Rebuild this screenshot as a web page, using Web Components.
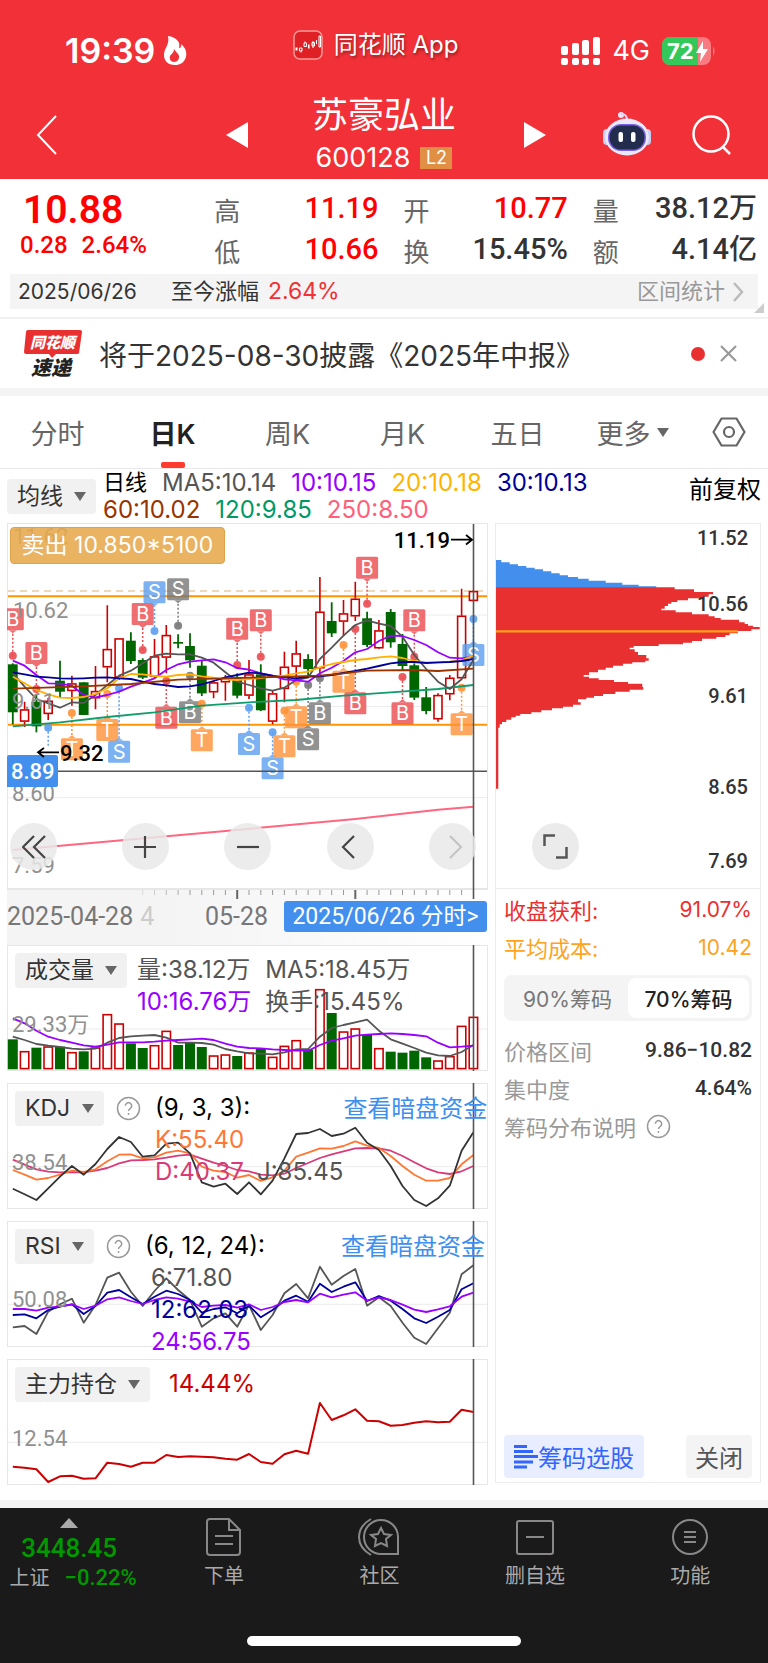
<!DOCTYPE html>
<html lang="zh-CN">
<head>
<meta charset="utf-8">
<meta name="viewport" content="width=device-width, initial-scale=1">
<title>苏豪弘业 600128</title>
<style>
html{--ui:"Inter","Noto Sans CJK SC",sans-serif;--din:"Roboto","Noto Sans CJK SC",sans-serif;--line:#ececec;--fill:#f4f4f4}
body{margin:0;background:#fff;color:#333;font-family:var(--ui)}
</style>
</head>
<body>
<stock-page>
  <app-header slot="header" name="苏豪弘业" code="600128"></app-header>
  <quote-board></quote-board>
  <news-bar>将于2025-08-30披露《2025年中报》</news-bar>
  <period-tabs></period-tabs>
  <ma-legend></ma-legend>
  <chart-area>
    <kline-chart slot="charts"></kline-chart>
    <time-ruler slot="charts"></time-ruler>
    <indicator-panel slot="charts" kind="vol"></indicator-panel>
    <indicator-panel slot="charts" kind="kdj"></indicator-panel>
    <indicator-panel slot="charts" kind="rsi"></indicator-panel>
    <indicator-panel slot="charts" kind="hold"></indicator-panel>
    <chip-panel slot="side"></chip-panel>
  </chart-area>
  <bottom-nav slot="footer"></bottom-nav>
</stock-page>
<script>
const BASE = `<style>
*{box-sizing:border-box}
:host{display:block;box-sizing:border-box}
button,select{font:inherit;color:inherit;border:0;background:none;padding:0;margin:0;appearance:none;white-space:nowrap}
a{color:inherit;text-decoration:none}
svg{display:block}
svg text{font-family:var(--din)}
</style>`;
function define(name, render) {
  customElements.define(name, class extends HTMLElement {
    connectedCallback() {
      if (this.shadowRoot) return;
      this.attachShadow({ mode: 'open' }).innerHTML = BASE + render(this);
    }
  });
}

/* Horizontal position of day i in every chart of the left column */
const X = i => Math.round((12.8 + 11.81 * i) * 10) / 10;
const line = (ys, base, color, w = 1.8) =>
  `<polyline fill="none" stroke="${color}" stroke-width="${w}" stroke-linejoin="round" points="${ys.map((y, i) => y == null ? '' : X(i) + ',' + (base + y / 3).toFixed(1)).join(' ')}"/>`;
const sparse = o => Array.from({ length: 40 }, (_, i) => o[i] ?? null);
const RED = '#cc0000', GREEN = '#006600';
const drop = (label, size = 23) => `<label class="drop"><select aria-label="${label}"><option>${label}</option></select><svg width="12" height="9" viewBox="0 0 12 9"><path d="M0 0H12L6 9Z" fill="#666"/></svg></label>`;
const DROP_CSS = `.drop{position:relative;display:inline-flex;height:35px;border-radius:4px;background:#f1f1f1;color:#333;font-size:23px;line-height:35px}
.drop select{padding:0 33px 0 10px;height:35px;line-height:35px}
.drop svg{position:absolute;right:10px;top:13px;pointer-events:none}`;
const HELP = `<svg width="25" height="25" viewBox="0 0 25 25" fill="none" stroke="#999" stroke-width="1.5"><circle cx="12.500" cy="12.500" r="11"/><path d="M9.300 9.800a3.200 3.200 0 1 1 4.800 2.800c-1.100.7-1.600 1.200-1.600 2.500"/><path d="M12.500 17v1.900"/></svg>`;

define('stock-page', () => `<style>
main{display:block}
.gap{height:8px;background:var(--fill);margin-top:15px}
</style><slot name="header"></slot><main><slot></slot></main><div class="gap"></div><slot name="footer"></slot>`);

define('app-header', el => `<style>
:host{background:#f23037;color:#fff}
.status{display:grid;grid-template-columns:1fr auto 1fr;height:90px;padding:11px 52px 0 65px;align-items:center}
.time,.sys{display:flex;align-items:center}
.time{font-size:34px;font-weight:600;gap:8px;line-height:40px}
.app{display:flex;align-items:center;gap:11px;font-size:24px;line-height:34px;margin:0 30px 11px 0;text-shadow:1px 2px 3px #0006}
.sys{justify-content:flex-end;gap:12px;font-size:27px}
.nav{display:grid;grid-template-columns:1fr 160px 1fr;gap:56px;padding:0 36px;height:89px;align-items:start}
.l,.r{display:flex;align-items:center;justify-content:space-between;height:89px}
.r{padding-left:4px}
.r .bot{margin:0 41px 2px auto}
h1{margin:0;font-size:36px;line-height:50px;font-weight:400;text-align:center;white-space:nowrap}
.code{display:flex;justify-content:center;align-items:center;gap:10px;font-size:27px;line-height:36px}
.code b{background:#e08f45;font-weight:400;font-size:18px;line-height:22px;width:32px;text-align:center}
</style>
<div class="status">
 <div class="time"><span>19:39</span><svg width="24" height="30" viewBox="0 0 24 30"><path d="M5 0C13 1 18 6 16 12C19 12 18 8 18 8C23 12 24 17 23 21C21 27 17 29 12 29C5 29 1 25 1 19C1 12 7 9 5 0Z" fill="#fff"/><path d="M11 13C13 17 17 18 16 22C15 25 13 26 11 26C8 26 6 23 7 20C8 18 11 17 11 13Z" fill="#f23037"/></svg></div>
 <div class="app"><svg width="30" height="30" viewBox="0 0 30 30"><rect x="1" y="1" width="28" height="28" rx="6" fill="#df2025" stroke="#ff9a98" stroke-width="1.500"/><path d="M2.500 17.500h2v3h-2zM15 14.500h1.600v4H15z" fill="#fff"/><path d="M6.500 18h2.500v3H6.500zM8 21v1.500M11 13h2.500v3.500H11zM12 11.500v1.500M19 12.500h2.500v3.500H19zM20 11v7M23.500 10v4M26 6h1.500v11H26z" fill="none" stroke="#fff"/></svg><span>同花顺 App</span></div>
 <div class="sys"><svg width="40" height="28" viewBox="0 0 40 28" fill="#fff"><rect x="1" y="9" width="7" height="9" rx="2"/><rect x="12" y="6" width="7" height="12" rx="2"/><rect x="22" y="3" width="7" height="15" rx="2"/><rect x="33" y="0" width="7" height="18" rx="2"/><rect x="1" y="21" width="7" height="7" rx="2"/><rect x="12" y="21" width="7" height="7" rx="2"/><rect x="22" y="21" width="7" height="7" rx="2"/><rect x="33" y="21" width="7" height="7" rx="2"/></svg><span>4G</span>
 <svg width="54" height="28" viewBox="0 0 54 28"><rect width="49" height="28" rx="8" fill="#f77b80"/><path d="M8 0H36V28H8A8 8 0 0 1 0 20V8A8 8 0 0 1 8 0Z" fill="#34c759"/><path d="M51 9Q54 14 51 19Z" fill="#f77b80"/><text x="5" y="22" font-size="22" font-weight="700" fill="#fff" style="font-family:Inter">72</text><path d="M41 4L34 16H39L38 25L46 12H41Z" fill="#fff"/></svg></div>
</div>
<div class="nav">
 <div class="l"><button aria-label="返回"><svg width="22" height="40" viewBox="0 0 22 40"><path d="M20 1L2 20L20 39" fill="none" stroke="#fff" stroke-width="2"/></svg></button><button aria-label="上一只"><svg width="22" height="26" viewBox="0 0 22 26"><path d="M22 0V26L0 13Z" fill="#fff"/></svg></button></div>
 <div><h1>${el.getAttribute('name')}</h1><div class="code"><span>${el.getAttribute('code')}</span><b>L2</b></div></div>
 <div class="r"><button aria-label="下一只"><svg width="22" height="26" viewBox="0 0 22 26"><path d="M0 0V26L22 13Z" fill="#fff"/></svg></button>
 <button class="bot" aria-label="智能助手"><svg width="48" height="45" viewBox="0 0 48 45"><circle cx="18" cy="4" r="3" fill="#e6e6fb"/><path d="M18 3Q24 3 24 9" fill="none" stroke="#d6d6f4" stroke-width="2"/><rect x="0" y="18" width="8" height="16" rx="4" fill="#c9cdf0"/><rect x="40" y="18" width="8" height="16" rx="4" fill="#c9cdf0"/><ellipse cx="24" cy="26" rx="22" ry="18.500" fill="#e9e9fa"/><rect x="5" y="13" width="38" height="27" rx="13" fill="#7a5fe0"/><rect x="6.500" y="14.500" width="35" height="24" rx="11.500" fill="#222c4c"/><rect x="15.500" y="21" width="4.500" height="10" rx="2" fill="#fff"/><rect x="28" y="21" width="4.500" height="10" rx="2" fill="#fff"/></svg></button>
 <button aria-label="搜索"><svg width="40" height="40" viewBox="0 0 40 40" fill="none" stroke="#fff" stroke-width="2.500"><circle cx="19" cy="19" r="17.500"/><path d="M31 32L38 39"/></svg></button></div>
</div>`);

define('quote-board', () => `<style>
:host{padding-top:10px;border-bottom:2px solid #f1f1f1;position:relative}
.q{display:grid;grid-template-columns:169fr 164fr 164fr 164fr;column-gap:25px;padding:0 11px 3px 20px}
.now{grid-row:span 2;color:#f00;font-family:var(--din);white-space:nowrap}
.now strong{display:block;font-size:39px;line-height:42px;padding-left:3px;font-weight:600}
.now span{font-size:24px;line-height:28px;font-weight:500;margin-right:14px}
.c{display:flex;justify-content:space-between;align-items:center;height:41px;font-size:26px;color:#666;white-space:nowrap}
.c b{font-family:var(--din);font-size:29px;font-weight:500;color:#333;margin-bottom:3px}
.c i{font:500 28px/30px "Noto Sans CJK SC"}
.c .up{color:#f00}
.strip{margin:0 10px 8px;height:35px;padding:0 14px 0 8px;background:var(--fill);display:flex;align-items:center;font-size:22px;line-height:35px}
.strip span{margin-left:34px;margin-right:9px}
.strip em{font-style:normal;color:#f23037;font-size:23px}
.strip time{font-size:21px}
.strip a{margin-left:auto;color:#999;display:flex;align-items:center;gap:8px}
.corner{position:absolute;right:4px;bottom:4px}
</style>
<div class="q">
<div class="now"><strong>10.88</strong><span>0.28</span><span>2.64%</span></div>
<div class="c">高<b class="up">11.19</b></div><div class="c">开<b class="up">10.77</b></div><div class="c">量<b>38.12<i>万</i></b></div>
<div class="c">低<b class="up">10.66</b></div><div class="c">换<b>15.45%</b></div><div class="c">额<b>4.14<i>亿</i></b></div>
</div>
<div class="strip"><time>2025/06/26</time><span>至今涨幅</span><em>2.64%</em><a href="#stat">区间统计<svg width="11" height="20" viewBox="0 0 11 20"><path d="M1 1L9 10L1 19" fill="none" stroke="#bbb" stroke-width="2.500"/></svg></a></div>
<svg class="corner" width="10" height="10" viewBox="0 0 10 10"><path d="M10 0V10H0Z" fill="#ccc"/></svg>`);

define('news-bar', () => `<style>
:host{display:flex;align-items:center;height:77px;border-bottom:8px solid var(--fill);padding:0 31px 0 24px;font-size:28px;white-space:nowrap}
.logo{margin-right:17px;overflow:visible}
.t{margin-right:auto}
.dot{width:14px;height:14px;border-radius:7px;background:#e93030;margin-right:15px}
svg text{font-family:"Noto Sans CJK SC";font-weight:900;font-style:italic}
</style>
<svg class="logo" width="58" height="48" viewBox="0 0 58 48"><path d="M4 0H56Q58 0 58 2L55 23Q55 24 53 24H32L28 28L25 24H2Q0 24 0 22L2 2Q2 0 4 0Z" fill="#e93030"/><text x="6" y="18" font-size="15" fill="#fff">同花顺</text><text x="7" y="45" font-size="20" fill="#222">速递</text></svg>
<span class="t"><slot></slot></span><span class="dot"></span>
<button aria-label="关闭公告"><svg width="17" height="17" viewBox="0 0 17 17"><path d="M1 1L16 16M16 1L1 16" stroke="#999" stroke-width="2.200"/></svg></button>`);

define('period-tabs', () => `<style>
nav{display:grid;grid-template-columns:repeat(6,115fr) 78fr;height:73px;border-bottom:1px solid #e8e8e8;color:#666;font-size:27px}
button{position:relative;display:flex;align-items:center;justify-content:center;gap:6px}
.on{color:#222;font-weight:600}
.on::after{content:"";position:absolute;left:50%;bottom:0;width:24px;margin-left:-12px;height:6px;border-radius:2px;background:#ff3b30}
</style>
<nav><button>分时</button><button class="on" aria-current="true">日K</button><button>周K</button><button>月K</button><button>五日</button><button>更多<svg width="12" height="9" viewBox="0 0 12 9"><path d="M0 0H12L6 9Z" fill="#666"/></svg></button>
<button aria-label="设置"><svg width="34" height="30" viewBox="0 0 34 30" fill="none" stroke="#666" stroke-width="2.200"><path d="M9.500 1.500H24.500L32.500 15L24.500 28.500H9.500L1.500 15Z" stroke-linejoin="round"/><circle cx="17" cy="15" r="5"/></svg></button></nav>`);

define('ma-legend', () => `<style>
:host{display:flex;align-items:center;height:54px;padding:0 7px;white-space:nowrap}
${DROP_CSS}
.vals{display:flex;flex-wrap:wrap;column-gap:15px;margin-left:7px;width:520px;font-size:24px;line-height:27px;color:#555}
.vals b{color:#000;font-weight:400;font-size:22px}
.adj{margin:0 0 18px auto;font-size:24px;color:#000}
</style>${drop('均线')}
<div class="vals"><b>日线</b><span>MA5:10.14</span><span style="color:#9900ff">10:10.15</span><span style="color:#ffb400">20:10.18</span><span style="color:#000099">30:10.13</span><span style="color:#993300">60:10.02</span><span style="color:#009966">120:9.85</span><span style="color:#ff5f7a">250:8.50</span></div>
<button class="adj">前复权</button>`);

define('chart-area', () => `<style>
:host{display:grid;grid-template-columns:481fr 266fr;gap:7px;padding:0 7px}
.l{display:flex;flex-direction:column;min-width:0}
.r{display:flex;flex-direction:column;min-width:0}
::slotted(chip-panel){flex:1}
</style><div class="l"><slot name="charts"></slot></div><div class="r"><slot name="side"></slot></div>`);

/* direction, high, body top, body bottom, low */
const DAYS = [
['g',445,448,592,628],['r',560,583,620,636],['g',540,560,634,652],['r',548,557,597,615],['g',437,497,530,548],['r',482,505,528,572],['g',502,502,600,600],['r',453,528,550,583],['r',271,402,457,502],['r',370,370,488,495],
['g',352,377,438,447],['g',430,435,488,492],['r',372,424,485,490],['r',330,360,428,475],['g',358,381,386,400],['g',355,393,436,458],['g',437,452,535,543],['r',495,502,532,550],['r',480,490,502,557],['g',475,487,542,550],
['r',435,478,542,552],['g',448,478,586,588],['r',525,535,620,628],['r',410,455,522,562],['r',377,415,455,490],['g',418,432,462,484],['r',186,290,460,480],['g',262,318,355,366],['r',255,295,320,362],['r',200,251,304,318],
['g',290,310,390,396],['r',315,346,400,402],['g',282,291,382,398],['g',357,387,453,465],['g',445,451,548,555],['g',516,547,588,598],['r',535,540,613,620],['r',480,488,538,556],['r',221,302,490,492],['r',225,228,258,260]];
const candle = (d, i) => {
  const y = v => (515 + v / 3).toFixed(1), x = X(i);
  return d[0] === 'g'
    ? `<path d="M${x} ${y(d[1])}V${y(d[4])}" stroke="${GREEN}" stroke-width="1.800"/><rect x="${x - 4.9}" y="${y(d[2])}" width="9.800" height="${(d[3] - d[2]) / 3}" fill="${GREEN}"/>`
    : `<path d="M${x} ${y(d[1])}V${y(d[2])}M${x} ${y(d[3])}V${y(d[4])}" stroke="${RED}" stroke-width="1.600"/><rect x="${x - 4}" y="${515.6 + d[2] / 3}" width="8" height="${Math.max(1, (d[3] - d[2]) / 3 - 1.2)}" fill="#fff" stroke="${RED}" stroke-width="1.600"/>`;
};
/* day, letter, colour, badge centre, dot */
const MARKS = [[0,'B','r',313,422],[2,'B','r',414,522],[11,'B','r',297,405],[12,'S','b',232,348],[14,'S','k',223,332],[19,'B','r',341,450],[21,'B','r',316,425],[30,'B','r',158,266],[34,'B','r',316,425],[39,'S','b',420,312],
[3,'','b',740,638],[5,'T','o',703,594],[8,'T','o',645,537],[9,'S','b',710,520],[13,'B','r',608,498],[15,'B','k',592,482],[16,'T','o',676,566],[20,'S','b',687,578],[22,'S','b',760,652],[23,'T','o',694,587],[24,'T','o',607,500],[25,'S','k',673,510],[26,'B','k',595,490],[28,'T','o',500,390],[29,'B','r',565,342],[33,'B','r',595,486],[38,'T','o',628,518]];
const INK = { r: '#ea4a50', b: '#5c9ff0', k: '#777', o: '#ff9236' };
const mark = ([i, t, c, b, d]) => {
  const x = X(i), by = 515 + b / 3, dy = 515 + d / 3, up = b < d, e = up ? by + 11 : by - 11, p = up ? e + 3 : e - 3;
  return `<g fill="${INK[c]}"><path d="M${x} ${dy}V${p}" stroke="${INK[c]}" stroke-width="1.500" stroke-dasharray="2 2"/><circle cx="${x}" cy="${dy}" r="4" opacity=".9"/>` +
    (t ? `<g opacity=".8"><rect x="${x - 11}" y="${by - 11}" width="22" height="22" rx="1.500"/><path d="M${x - 4} ${e}H${x + 4}L${x} ${p}Z"/></g><text x="${x}" y="${by + 7}" text-anchor="middle" font-size="20" fill="#fff" style="font-family:Inter">${t}</text>` : '') + '</g>';
};
const MA = [
 line(sparse({0:634,4:622,8:606,12:592,16:572,20:562,24:555,28:542,32:532,36:522,39:510}),515,'#139c6b'),
 line([475,515,552,565,578,562,564,540,510,482,467,445,422,416,418,418,428,443,472,500,510,520,527,518,495,488,432,398,362,330,316,326,333,365,420,462,500,522,493,435],515,'#555'),
 line([437,452,480,505,506,512,540,547,540,530,515,503,490,465,448,440,436,433,442,459,464,475,482,493,496,500,475,458,438,412,402,378,362,363,375,390,412,428,430,425],515,'#9900ff'),
 line([485,505,525,538,548,549,546,537,520,490,477,478,483,485,480,478,484,488,493,495,492,489,484,482,475,470,457,447,441,435,432,427,424,429,438,443,443,440,436,422],515,'#ffb000'),
 line([472,478,485,487,490,491,490,488,487,490,492,500,507,511,516,514,508,498,487,480,473,475,483,487,490,485,484,480,474,468,461,453,445,441,441,444,442,441,438,432],515,'#000099'),
 line(sparse({0:521,6:514,10:507,14:494,18:490,20:488,26:482,28:475,30:467,34:465,36:468,39:461}),515,'#993300'),
 line(sparse({0:1005,18:948,29:912,36:884,39:875}),515,'#ff6680',2)].join('');

define('kline-chart', () => `<style>
:host{position:relative}
.sell{position:absolute;left:3px;top:4px;height:37px;width:215px;border:1px solid #dd9c3e;border-radius:4px;background:#e7a94df0;opacity:.93;color:#fff;font-size:23px;line-height:35px;text-align:center;white-space:nowrap}
.tools{position:absolute;left:3px;right:12px;bottom:19px;display:flex;justify-content:space-between}
.tools button{width:47px;height:47px;border-radius:24px;background:#e9e9e9d9;display:grid;place-items:center}
.tools button:first-child{margin-right:9px}
.tools svg{stroke:#444;stroke-width:2.200;fill:none}
svg .ax{font-size:22px;fill:#909090}
svg .pk{font-size:22px;font-weight:500;fill:#000}
</style>
<svg width="100%" viewBox="7 523 481 366">
<rect x="7.500" y="523.500" width="480" height="365" fill="#fff" stroke="#e6e6e6"/>
<path d="M8 615H487M8 706.500H487M8 797.700H487" stroke="#ececec"/>
<text class="ax" x="13" y="544">11.62</text>
<path d="M8 591H487" stroke="#e6cda6" stroke-width="1.500" stroke-dasharray="7 5"/>
<path d="M8 596.300H487M8 724.800H487" stroke="#ff9500" stroke-width="2"/>
${DAYS.map(candle).join('')}
${MARKS.map(mark).join('')}
${MA}
<text class="ax" x="13" y="618">10.62</text><text class="ax" x="12" y="709">9.61</text><text class="ax" x="12" y="801">8.60</text><text class="ax" x="12" y="873">7.59</text>
<path d="M8 771.300H487M473.500 524V889" stroke="#555" stroke-width="1.600"/>
<path d="M7 757a2 2 0 0 1 2-2H56a2 2 0 0 1 2 2V785a2 2 0 0 1-2 2H7Z" fill="#438fee"/><text x="11" y="779" font-size="22" font-weight="500" fill="#fff">8.89</text>
<text class="pk" x="60" y="761">9.32</text><path d="M59 752.300H38M44 748L38 752.300L44 757" fill="none" stroke="#000" stroke-width="1.800"/>
<text class="pk" x="450" y="548" text-anchor="end">11.19</text><path d="M451 539.700H472M466 535L472 539.700L466 544.500" fill="none" stroke="#000" stroke-width="1.800"/>
</svg>
<div class="sell">卖出 10.850*5100</div>
<div class="tools">
<button aria-label="最左"><svg width="24" height="24" viewBox="0 0 24 24"><path d="M12 1L1 12L12 23M23 1L12 12L23 23"/></svg></button>
<button aria-label="放大"><svg width="24" height="24" viewBox="0 0 24 24"><path d="M12 1V23M1 12H23"/></svg></button>
<button aria-label="缩小"><svg width="24" height="24" viewBox="0 0 24 24"><path d="M1 12H23"/></svg></button>
<button aria-label="左移"><svg width="24" height="24" viewBox="0 0 24 24"><path d="M16 1L5 12L16 23"/></svg></button>
<button aria-label="右移" disabled><svg width="24" height="24" viewBox="0 0 24 24" style="stroke:#c4c4c4"><path d="M9 1L20 12L9 23"/></svg></button>
</div>`);

define('time-ruler', () => `<style>
:host{display:grid;height:56px;background:var(--fill);color:#777}
:host>*{grid-area:1/1}
.row{display:flex;align-items:center;height:31px;margin-top:12px;font:25px/31px var(--din);position:relative;white-space:nowrap}
.f{color:#ccc;margin-left:7px}
.m{margin-left:auto;margin-right:16px}
a{background:#438fee;color:#fff;border-radius:3px;width:203px;text-align:center;margin-right:1px;font-size:23px}
</style>
<svg width="100%" viewBox="7 889 481 56"><defs><linearGradient id="g"><stop stop-color="#f4f4f4"/><stop offset=".3" stop-color="#f4f4f4"/><stop offset=".7" stop-color="#fafafa"/><stop offset="1" stop-color="#fff"/></linearGradient></defs><rect x="7" y="889" width="481" height="56" fill="url(#g)"/>
<path d="M7 889.500H488" stroke="#e6e6e6"/>
${Array.from({ length: 28 }, (_, k) => { const i = k + 11, big = i === 19 || i === 29; return `<path d="M${X(i)} 890V${big ? 899 : 895}" stroke="${big ? '#666' : '#999'}" stroke-width="${big ? 2 : 1}" opacity="${Math.min(1, .3 + k / 6)}"/>`; }).join('')}
<path d="M473.500 889V899" stroke="#555" stroke-width="1.600"/></svg>
<div class="row"><span>2025-04-28</span><span class="f">4</span><span class="m">05-28</span><a href="#minute">2025/06/26 分时&gt;</a></div>`);

const VOL = [298,333,323,319,320,336,334,322,222,250,310,324,315,272,315,308,321,346,343,348,337,326,350,317,300,328,147,219,274,265,284,324,335,338,332,352,361,348,257,230];
const PANELS = {
 vol: { top: 945, grid: 1029, axis: '29.33万', ay: 1032, label: '成交量',
  draw: VOL.map((v, i) => { const x = X(i), y = 940 + v / 3, h = 1069.300 - y; return DAYS[i][0] === 'g' ? `<rect x="${x - 5}" y="${y}" width="10" height="${h}" fill="${GREEN}"/>` : `<rect x="${x - 4.2}" y="${y + .7}" width="8.400" height="${h - 1.4}" fill="#fff" stroke="${RED}" stroke-width="1.600"/>`; }).join('')
  + line([290,300,312,317,321,326,328,326,308,294,289,287,285,293,308,308,309,314,327,334,340,341,343,337,328,327,290,264,255,247,239,272,298,311,324,338,346,348,336,315],940,'#555')
  + line([235,250,272,290,300,308,316,320,314,307,307,307,305,302,300,298,296,300,311,320,324,325,328,330,332,332,315,302,295,287,284,282,280,282,285,289,308,322,320,317],940,'#9900ff'),
  head: `<div class="v two"><span>量:38.12万</span><span>MA5:18.45万</span><span style="color:#9900ff">10:16.76万</span><span>换手:15.45%</span></div>` },
 kdj: { top: 1083, grid: 1166.700, axis: '38.54', ay: 1170, label: 'KDJ',
  draw: line([659,674,688,695,697,696,697,692,684,670,661,660,658,653,647,644,656,668,678,690,694,704,706,701,684,669,654,643,634,625,624,625,632,648,667,685,697,702,694,678],940,'#d93a78')
  + line([690,704,719,714,704,692,696,688,664,644,643,655,652,638,632,640,680,692,696,713,705,723,712,692,650,638,625,626,618,604,617,624,648,678,704,722,722,714,673,645],940,'#ff7733')
  + line([746,763,780,745,710,678,704,672,627,591,606,650,646,611,608,640,727,740,731,762,727,763,722,655,582,579,567,588,581,563,608,630,678,738,780,798,775,737,632,577],940,'#333'),
  head: `<button class="h" aria-label="说明">${HELP}</button><div class="v"><span class="k">(9, 3, 3):</span><span style="color:#ff7733">K:55.40</span><span><i style="color:#d93a78">D:40.37</i>J:85.45</span></div><a href="#dark">查看暗盘资金</a>` },
 rsi: { top: 1221, grid: 1304.300, axis: '50.08', ay: 1307, label: 'RSI',
  draw: line([352,348,372,305,283,266,338,285,203,188,245,288,243,205,240,270,350,325,310,350,285,360,315,250,222,265,170,224,198,177,287,262,288,338,383,402,355,308,193,166],1210,'#555')
  + line([315,313,325,300,290,283,312,288,248,240,262,282,260,242,252,270,308,297,292,310,287,322,300,272,257,275,221,246,230,217,273,258,272,297,325,339,320,300,238,220],1210,'#000099')
  + line([297,297,302,293,289,283,297,287,268,262,273,282,270,262,266,275,291,287,285,293,283,300,291,276,270,277,251,262,254,247,272,262,270,284,299,306,298,289,260,248],1210,'#9900ff'),
  head: `<button class="h" aria-label="说明">${HELP}</button><div class="v"><span class="k">(6, 12, 24):</span><span class="in">6:71.80</span><span class="in" style="color:#000099">12:62.03</span><span class="in" style="color:#9900ff">24:56.75</span></div><a href="#dark">查看暗盘资金</a>` },
 hold: { top: 1359, grid: 1442.300, axis: '12.54', ay: 1446, label: '主力持仓',
  draw: line([770,773,778,816,799,797,806,805,758,762,770,758,758,735,741,739,740,742,746,749,732,756,761,733,722,731,579,630,616,598,632,634,647,645,638,634,637,635,599,606],1210,'#cc0000',2),
  head: `<div class="v" style="color:#cc0000;margin-left:19px"><span>14.44%</span></div>` }
};
define('indicator-panel', el => {
  const p = PANELS[el.getAttribute('kind')];
  return `<style>
:host{display:grid;height:126px}
:host(:not([kind=hold])){margin-bottom:12px}
:host>*{grid-area:1/1;min-width:0}
.head{position:relative;display:flex;align-items:flex-start;padding:8px 3px 0 8px;height:126px;font-size:23px;white-space:nowrap;color:#555}
${DROP_CSS}
.h{margin:5px 0 0 12px}
.v{display:grid;line-height:32px;margin:1px 0 0 16px;font-size:24px;align-content:start}
.two{grid-template-columns:auto auto;column-gap:14px;margin-left:10px}
.h+.v{margin-left:14px}
.k{color:#000}
.in{padding-left:6px}
i{font-style:normal;margin-right:13px}
a{margin-left:auto;color:#3d8ff0;font-size:24px;line-height:35px}
</style>
<svg width="100%" viewBox="7 ${p.top} 481 126">
<rect x="7.500" y="${p.top + .5}" width="480" height="125" fill="#fff" stroke="#e6e6e6"/><path d="M8 ${p.grid}H487" stroke="#ececec"/>
${p.draw}
<text x="12" y="${p.ay}" font-size="22" fill="#909090">${p.axis}</text>
<path d="M473.500 ${p.top}V${p.top + 126}" stroke="#555" stroke-width="1.600"/></svg>
<div class="head">${drop(p.label)}${p.head}</div>`;
});

/* Cost distribution: width reached at each price step */
const BLUE = [[40,135],[65,142],[90,148],[115,153],[140,158],[165,163],[190,169],[215,175],[240,181],[270,186],[302,191],[353,197],[403,203],[452,209],[505,214]];
const CHIPS = [[560,217],[618,223],[675,231],[662,238],[645,245],[600,250],[568,256],[550,261],[540,266],[530,273],[520,281],[563,286],[612,292],[662,298],[680,304],[698,309],[753,314],[770,322],[780,327],[795,332],[815,336],[790,343],[750,348],[725,355],[712,361],[685,366],[642,371],[612,378],[585,383],[512,388],[437,393],[425,398],[440,403],[450,411],[475,420],[482,430],[472,437],[433,442],[405,446],[375,452],[353,458],[330,464],[303,472],[287,480],[303,485],[332,490],[378,495],[420,501],[463,506],[466,516],[425,524],[382,530],[345,537],[318,543],[295,548],[270,553],[278,562],[255,569],[225,575],[192,580],[160,586],[130,592],[97,597],[83,602],[70,607],[55,614],[42,621],[35,628],[31,638],[30,821]];
const steps = (pts, end) => { let d = `M496 ${515 + pts[0][1] / 3}`; pts.forEach(([x], k) => { const y = k + 1 < pts.length ? pts[k + 1][1] : end; d += `H${(488 + x / 3).toFixed(1)}V${(515 + y / 3).toFixed(1)}`; }); return d + 'H496Z'; };
define('chip-panel', () => `<style>
:host{display:flex;flex-direction:column;border:1px solid #ececec;margin-bottom:2px}
.map{position:relative;margin:-1px -1px 0}
.map button{position:absolute;left:37px;bottom:19px;width:47px;height:47px;border-radius:24px;background:#ebebeb;display:grid;place-items:center}
.rows{padding:1px 8px 0;font-size:22px;color:#999}
.row{display:flex;justify-content:space-between;align-items:center;height:38px;white-space:nowrap}
.row b{font:500 21px/30px var(--din);color:#333}
.row span{font-size:21px}
.seg{display:grid;grid-template-columns:1fr 1fr;height:46px;padding:3px;margin:9px 0 10px;border-radius:8px;background:var(--fill);font-size:21px;color:#777}
.seg .on{background:#fff;color:#222;border-radius:8px;font-weight:500}
.help{justify-content:flex-start;gap:10px}
.act{margin-top:auto;padding:0 8px 4px;display:flex;justify-content:space-between;font-size:24px}
.act button{height:43px;border-radius:4px;background:var(--fill);color:#555;padding:0 9px}
.act .pick{background:#e8edff;color:#3366ff;display:flex;align-items:center;padding:0 10px}
text{font-size:20px;font-weight:500;fill:#333;text-anchor:end}
</style>
<div class="map"><svg width="100%" viewBox="495 523 266 366">
<path d="M495 523.500H761M495 888.500H761" stroke="#ececec"/><path d="M495.500 523V889M760.500 523V889" stroke="#ececec"/>
<path d="${steps(BLUE, 217)}" fill="#438fee"/><path d="${steps(CHIPS, 821)}" fill="#e93030"/><rect x="496" y="587.300" width="160" height="10" fill="#e93030"/>
<path d="M496 631.400H738" stroke="#ff9f1a" stroke-width="2.200"/>
<text x="748" y="545">11.52</text><text x="748" y="611">10.56</text><text x="748" y="703">9.61</text><text x="748" y="794">8.65</text><text x="748" y="868">7.69</text></svg>
<button aria-label="全屏"><svg width="25" height="25" viewBox="0 0 25 25" fill="none" stroke="#555" stroke-width="2.500"><path d="M1.500 12V1.500H12M13 23.500H23.500V13"/></svg></button></div>
<div class="rows">
<div class="row" style="color:#e93030">收盘获利:<span>91.07%</span></div>
<div class="row" style="color:#ffa21f">平均成本:<span>10.42</span></div>
<div class="seg"><button>90%筹码</button><button class="on">70%筹码</button></div>
<div class="row">价格区间<b>9.86−10.82</b></div>
<div class="row">集中度<b>4.64%</b></div>
<div class="row help">筹码分布说明<button aria-label="说明">${HELP}</button></div>
</div>
<div class="act"><button class="pick"><svg width="24" height="24" viewBox="0 0 24 24" fill="#3366ff"><path d="M0 0H13V3H0ZM0 5H19V8H0ZM0 10H24V13H0ZM0 15.500H19V18.500H0ZM0 20.500H13V23.500H0Z"/></svg>筹码选股</button><button>关闭</button></div>`);

define('bottom-nav', () => `<style>
:host{background:#1a1a1a;color:#aaa;height:155px;padding-top:10px}
nav{display:grid;grid-template-columns:146fr repeat(4,155fr);font-size:20px;height:118px;white-space:nowrap}
.idx{display:flex;flex-direction:column;align-items:center}
.idx svg{margin:0 8px 4px 0}
.idx strong{font:500 26px/32px var(--din);color:#090;margin-right:8px}
.idx .s{display:flex;align-items:center;gap:15px;line-height:28px}
.idx b{font:500 22px/28px var(--din);color:#090}
a{display:flex;flex-direction:column;align-items:center;gap:5px;line-height:30px}
a svg{fill:none;stroke:#888;stroke-width:2}
.bar{width:274px;height:10px;border-radius:5px;background:#fff;margin:0 auto}
</style>
<nav><a class="idx" href="#index" style="gap:0"><svg width="18" height="10" viewBox="0 0 18 10" style="fill:#aaa;stroke:none"><path d="M0 10H18L9 0Z"/></svg><strong>3448.45</strong><span class="s">上证<b>−0.22%</b></span></a>
<a href="#order"><svg width="36" height="38" viewBox="0 0 36 38"><path d="M3 1H23L34 12V34Q34 37 31 37H4Q1 37 1 34V4Q1 1 4 1ZM23 1V12H34M9 18H27M9 26H27"/></svg>下单</a>
<a href="#community"><svg width="42" height="38" viewBox="0 0 42 38"><path d="M40 36H23A17 17 0 1 1 40 19ZM13 1Q1 8 1 19T13 37"/><path d="M23 10L26 16L33 17L28 21L29 28L23 25L17 28L18 21L13 17L20 16Z"/></svg>社区</a>
<a href="#remove"><svg width="38" height="38" viewBox="0 0 38 38"><rect x="1" y="3" width="36" height="33" rx="2"/><path d="M10 19H28"/></svg>删自选</a>
<a href="#more"><svg width="36" height="38" viewBox="0 0 36 38"><circle cx="18" cy="19" r="17"/><path d="M12 14H24M12 19H24M12 24H24"/></svg>功能</a></nav>
<div class="bar"></div>`);
</script>
</body>
</html>
